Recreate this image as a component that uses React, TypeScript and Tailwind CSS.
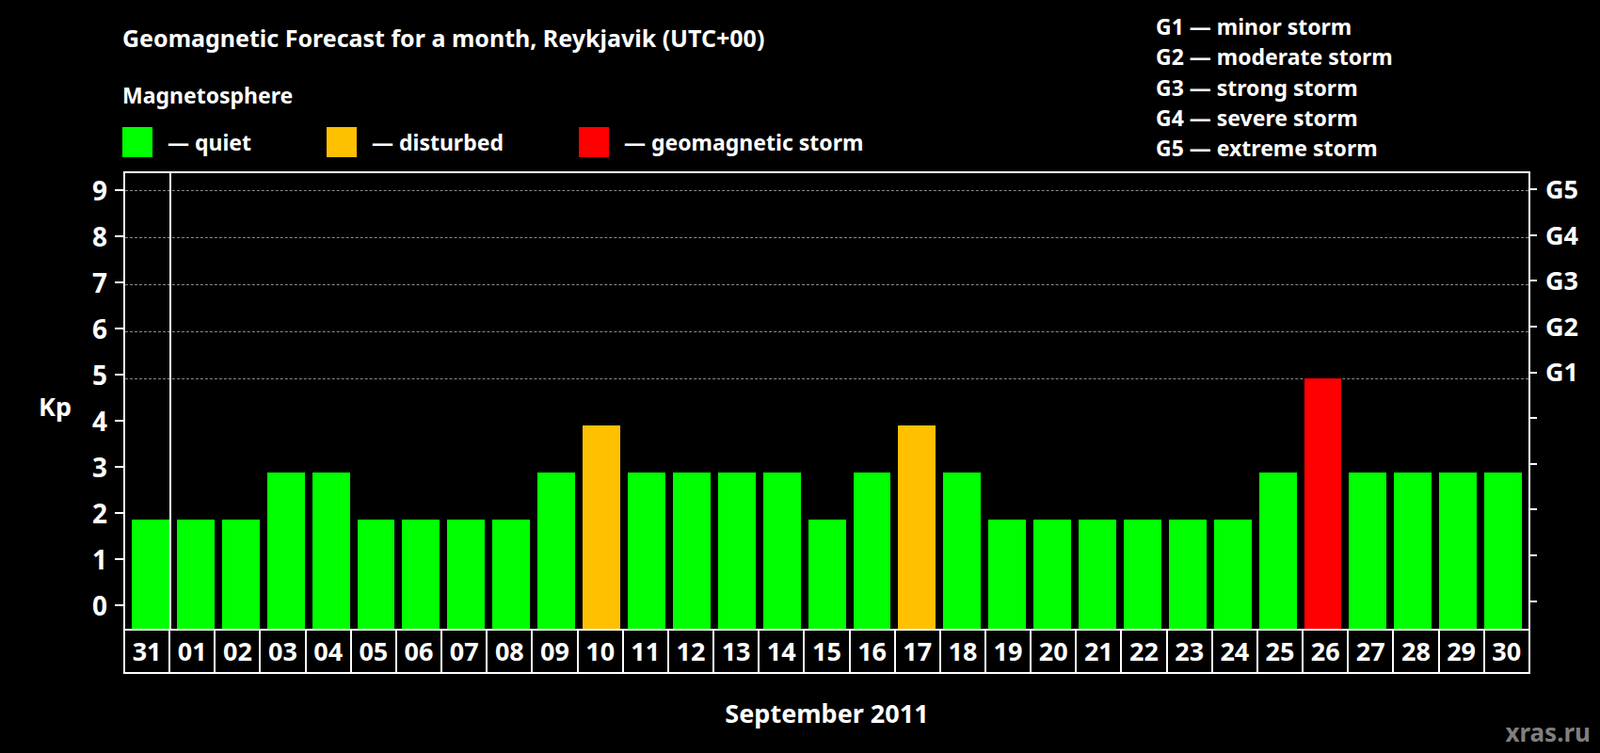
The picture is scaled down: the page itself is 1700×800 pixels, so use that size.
import React from "react";

const days: [string, number][] = [
  ["31", 2], ["01", 2], ["02", 2], ["03", 3], ["04", 3], ["05", 2], ["06", 2], ["07", 2],
  ["08", 2], ["09", 3], ["10", 4], ["11", 3], ["12", 3], ["13", 3], ["14", 3], ["15", 2],
  ["16", 3], ["17", 4], ["18", 3], ["19", 2], ["20", 2], ["21", 2], ["22", 2], ["23", 2],
  ["24", 2], ["25", 3], ["26", 5], ["27", 3], ["28", 3], ["29", 3], ["30", 3],
];

const levels = [9, 8, 7, 6, 5, 4, 3, 2, 1, 0];
const gLabels: Record<number, string> = { 9: "G5", 8: "G4", 7: "G3", 6: "G2", 5: "G1" };

const barColor = (v: number) =>
  v >= 5 ? "bg-[#ff0000]" : v === 4 ? "bg-[#ffc000]" : "bg-[#00ff00]";

const App: React.FC = () => {
  return (
    <div className="w-[1700px] h-[800px] bg-black text-white font-bold overflow-hidden [font-family:'Liberation_Sans',Arial,sans-serif]">
      {/* Header */}
      <div className="flex h-[182px]">
        <div className="w-[1228px] pl-[130px] pt-[22px]">
          <div className="text-[25px] leading-[36px]">
            Geomagnetic Forecast for a month, Reykjavik (UTC+00)
          </div>
          <div className="text-[23px] leading-[30px] mt-[28px]">Magnetosphere</div>
          <div className="flex items-center mt-[18px] text-[23px]">
            <div className="w-[32px] h-[32px] bg-[#00ff00]" />
            <span className="ml-[16px] w-[169px]">— quiet</span>
            <div className="w-[32px] h-[32px] bg-[#ffc000]" />
            <span className="ml-[16px] w-[220px]">— disturbed</span>
            <div className="w-[32px] h-[32px] bg-[#ff0000]" />
            <span className="ml-[16px]">— geomagnetic storm</span>
          </div>
        </div>
        <div className="pt-[12px] text-[23px] leading-[32.3px]">
          <div>G1 — minor storm</div>
          <div>G2 — moderate storm</div>
          <div>G3 — strong storm</div>
          <div>G4 — severe storm</div>
          <div>G5 — extreme storm</div>
        </div>
      </div>

      {/* Chart */}
      <div className="flex">
        {/* Left axis */}
        <div className="w-[131px] h-[486px] flex">
          <div className="w-[76px] flex items-center pl-[41px] text-[27px] pt-[14px]">Kp</div>
          <div className="flex-1 flex flex-col -mt-[5px]">
            {levels.map((l) => (
              <div key={l} className="h-[50px] flex items-center justify-end text-[28px]">
                <span className="mr-[8px]">{l}</span>
                <div className="w-[9px] h-[2px] bg-white" />
              </div>
            ))}
          </div>
        </div>

        {/* Plot + days */}
        <div className="w-[1495px]">
          <div className="relative h-[486px] border-t-2 border-l-2 border-r-2 border-white flex px-[3px]">
            {[9, 8, 7, 6, 5].map((l) => (
              <div
                key={l}
                className="absolute left-0 right-0 border-t border-dashed border-[#8a8a8a]"
                style={{ top: 18 + (9 - l) * 50 }}
              />
            ))}
            <div className="absolute top-0 bottom-0 left-[47px] w-[2px] bg-white" />
            {days.map(([d, v]) => (
              <div key={d} className="flex-1 flex items-end px-[4px]">
                <div className={`w-full relative ${barColor(v)}`} style={{ height: 16 + v * 50 }} />
              </div>
            ))}
          </div>
          <div className="flex border-2 border-white h-[48px]">
            {days.map(([d], i) => (
              <div
                key={d}
                className={`flex-1 flex items-center justify-center text-[27px] ${i > 0 ? "border-l-2 border-white" : ""}`}
              >
                {d}
              </div>
            ))}
          </div>
          <div className="text-center text-[27px] mt-[22px]">September 2011</div>
        </div>

        {/* Right axis */}
        <div className="h-[486px] flex flex-col -mt-[5px]">
          {levels.map((l) => (
            <div key={l} className="h-[50px] flex items-center text-[27px]">
              <div className="w-[9px] h-[2px] bg-white -ml-[2px]" />
              <span className="ml-[9px]">{gLabels[l] ?? ""}</span>
            </div>
          ))}
        </div>
      </div>

      <div className="flex justify-end pr-[10px] -mt-[20px] text-[26px] text-[#7f7f7f]">xras.ru</div>
    </div>
  );
};

export default App;
